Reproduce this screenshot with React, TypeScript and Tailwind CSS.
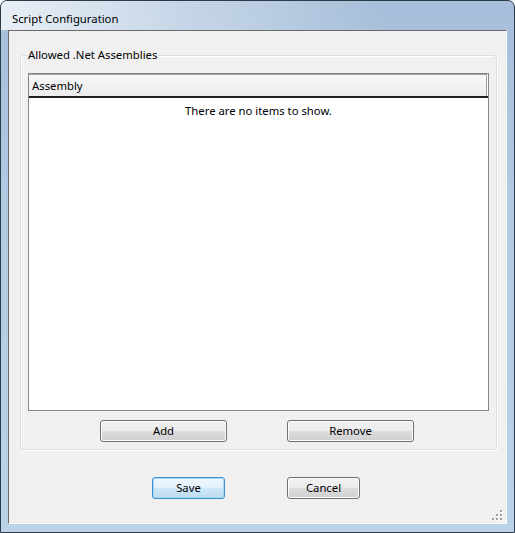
import React from 'react';

const font = { fontFamily: '"Noto Sans", "Open Sans", sans-serif' };

const WinButton: React.FC<{ label: string; width: string; isDefault?: boolean; className?: string }> = ({
  label,
  width,
  isDefault,
  className,
}) => {
  const frame = isDefault
    ? 'border-[#3c8fd0] bg-[linear-gradient(#eef7fd_0%,#e2f1fb_48%,#cfe7f7_52%,#bcdcf1_100%)] shadow-[inset_0_0_0_1px_#a9d8f5]'
    : 'border-[#707070] bg-[linear-gradient(#f2f2f2_0%,#ebebeb_48%,#dddddd_52%,#cfcfcf_100%)] shadow-[inset_0_0_0_1px_#fcfcfc]';
  return (
    <button
      className={`${width} h-[22px] shrink-0 rounded-[3px] border text-[11.3px] leading-none text-black ${frame} ${className ?? ''}`}
    >
      {label}
    </button>
  );
};

const ResizeGrip: React.FC = () => (
  <svg width="11" height="11" viewBox="0 0 11 11" className="block">
    {[
      [8, 0],
      [8, 4],
      [4, 4],
      [8, 8],
      [4, 8],
      [0, 8],
    ].map(([x, y]) => (
      <g key={`${x}-${y}`}>
        <rect x={x + 1} y={y + 1} width="2" height="2" fill="#ffffff" />
        <rect x={x} y={y} width="2" height="2" fill="#a0a0a0" />
      </g>
    ))}
  </svg>
);

const App: React.FC = () => {
  return (
    <div className="w-[515px] h-[533px] bg-white" style={font}>
      <div className="w-[515px] h-[533px] flex flex-col border border-[#2e3a48] rounded-t-[7px] bg-[linear-gradient(#a6bed9_0%,#b3cae3_40%,#bad2ea_100%)] overflow-hidden">
        {/* title bar */}
        <div className="h-[29px] shrink-0 flex items-center pl-[11px] bg-[linear-gradient(90deg,rgba(236,241,247,0.95)_0%,rgba(220,230,241,0.6)_35%,rgba(166,190,217,0)_75%)]">
          <span className="text-[11.3px] text-black leading-none pt-[6px]">Script Configuration</span>
        </div>

        {/* client area */}
        <div className="flex-1 px-[7px] pb-[8px] flex">
          <div className="flex-1 flex flex-col bg-[#f0f0f0] border-l border-t border-[#6b6b6b] border-r-white border-b-white border-r border-b">
            {/* group box */}
            <div className="relative mt-[24px] ml-[11px] w-[477px] h-[395px] rounded-[3px] border border-[#d5dfe5] shadow-[inset_1px_1px_0_#ffffff,1px_1px_0_#ffffff]">
              <span className="absolute left-[6px] -top-[8px] px-[1px] bg-[#f0f0f0] text-[11.3px] leading-[14px] text-black">
                Allowed .Net Assemblies
              </span>

              {/* list view */}
              <div className="mt-[17px] ml-[7px] w-[461px] h-[338px] border border-[#828790] bg-white flex flex-col">
                <div className="h-[24px] shrink-0 flex flex-col">
                  <div className="h-[22px] flex items-center pl-[3px] border-t border-[#a0a0a0] border-r mr-[1px] bg-[linear-gradient(#f7f7f7,#ececec)]">
                    <span className="text-[11.3px] leading-none text-black pt-[1px]">Assembly</span>
                  </div>
                  <div className="h-[2px] bg-[#1e1e1e]" />
                </div>
                <div className="pt-[6px] text-center text-[11.3px] leading-[14px] text-black">There are no items to show.</div>
              </div>

              {/* list buttons */}
              <div className="flex mt-[9px] ml-[79px]">
                <WinButton label="Add" width="w-[127px]" />
                <WinButton label="Remove" width="w-[127px]" className="ml-[60px]" />
              </div>
            </div>

            {/* dialog buttons */}
            <div className="flex mt-[27px] ml-[143px]">
              <WinButton label="Save" width="w-[73px]" isDefault />
              <WinButton label="Cancel" width="w-[73px]" className="ml-[62px]" />
            </div>

            <div className="mt-auto self-end mr-[3px] mb-[2px]">
              <ResizeGrip />
            </div>
          </div>
        </div>
      </div>
    </div>
  );
};

export default App;
